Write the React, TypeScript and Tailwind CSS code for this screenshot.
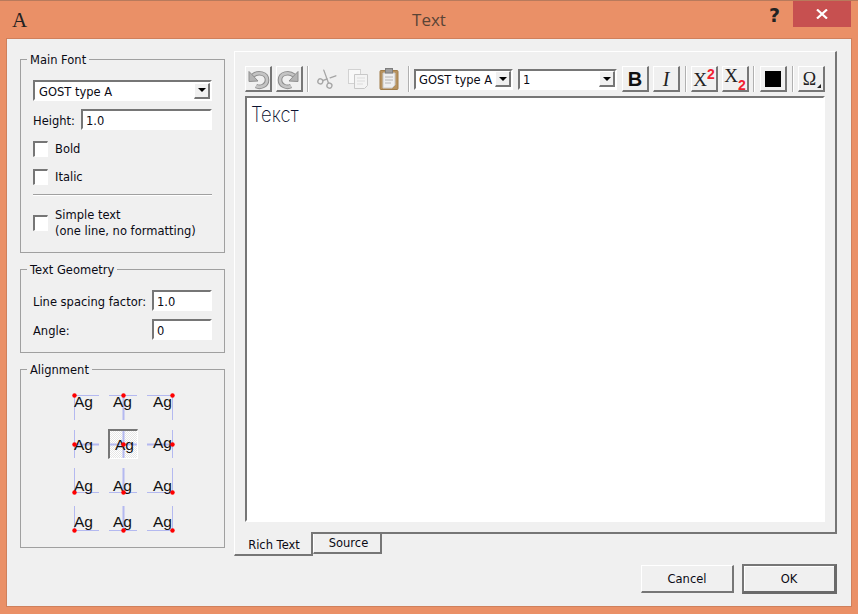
import React from "react";
import { Scissors } from "lucide-react";

const raised = "border-t border-l border-r-2 border-b-2 border-t-white border-l-white border-r-[#767676] border-b-[#767676] bg-[#f0f0f0]";
const sunken = "border-t-2 border-l-2 border-r-2 border-b-2 border-t-[#767676] border-l-[#767676] border-r-white border-b-white bg-white";

function Group({ title, children, className }: { title: string; children: React.ReactNode; className: string }) {
  return (
    <div className={"relative border border-[#a0a0a0] " + className}>
      <span className="absolute -top-[8px] left-[6px] bg-[#f0f0f0] px-[3px] leading-[16px] whitespace-nowrap">{title}</span>
      {children}
    </div>
  );
}

function Arrow() {
  return <span className="w-0 h-0 border-l-[4px] border-r-[4px] border-t-[4px] border-l-transparent border-r-transparent border-t-black" />;
}

function Combo({ text, className, inset }: { text: string; className: string; inset?: boolean }) {
  return (
    <div className={sunken + " flex items-center justify-between pl-[3px] pr-0 " + className}>
      <span className={"whitespace-nowrap pt-[2px] " + (inset ? "pl-[1px]" : "")}>{text}</span>
      <span className={raised + " w-[16px] h-[16px] flex items-center justify-center shrink-0"}>
        <Arrow />
      </span>
    </div>
  );
}

function Input({ value, className }: { value: string; className: string }) {
  return <div className={sunken + " h-[21px] flex items-center pl-[3px] pt-[2px] " + className}>{value}</div>;
}

function Check({ children, className }: { children: React.ReactNode; className?: string }) {
  return (
    <div className={"flex items-center gap-[7px] " + (className ?? "")}>
      <span className="w-[15px] h-[16px] shrink-0 bg-white border-t-2 border-l-2 border-r border-b border-t-[#767676] border-l-[#767676] border-r-white border-b-white" />
      <span className="pt-[1px]">{children}</span>
    </div>
  );
}

function TB({ children, className }: { children?: React.ReactNode; className?: string }) {
  return <div className={raised + " w-[27px] h-[26px] shrink-0 flex items-center justify-center relative " + (className ?? "")}>{children}</div>;
}

function Sep({ className }: { className?: string }) {
  return <div className={"w-[2px] h-[26px] shrink-0 bg-[#b0b0b0] border-r border-r-white " + (className ?? "")} />;
}

function Undo({ flip }: { flip?: boolean }) {
  return (
    <svg width="24" height="22" viewBox="0 0 24 22" style={flip ? { transform: "scaleX(-1)" } : undefined}>
      <path d="M7 7.5 C12 3.5 21 5 21 12 C21 18 14 20 10 18" fill="none" stroke="#8f8f8f" strokeWidth="4.6" />
      <path d="M7 7.5 C12 3.5 21 5 21 12 C21 18 14 20 10 18" fill="none" stroke="#c4c4c4" strokeWidth="2.6" />
      <path d="M3 3.5 L3 13.5 L12 13 Z" fill="#b4b4b4" stroke="#8f8f8f" strokeWidth="1" />
    </svg>
  );
}

function CopyIcon() {
  return (
    <svg width="22" height="22" viewBox="0 0 22 22">
      <rect x="1.5" y="1.5" width="12" height="14" fill="#f8f8f8" stroke="#d2d2d2" />
      <path d="M7.5 6.5 H20.5 V17.5 L17.5 20.5 H7.5 Z" fill="#f4f4f4" stroke="#c8c8c8" />
      <path d="M10 10 H18 M10 13 H18 M10 16 H16" stroke="#dcdcdc" />
    </svg>
  );
}

function PasteIcon() {
  return (
    <svg width="20" height="22" viewBox="0 0 20 22">
      <rect x="1" y="2.5" width="18" height="19" rx="1" fill="#b8935f" stroke="#a17d4a" />
      <path d="M4 5 H16 V17 L13 20 H4 Z" fill="#efefef" stroke="#c9c9c9" />
      <path d="M6 9 H14 M6 12 H14 M6 15 H12" stroke="#b4b4b4" />
      <rect x="6.5" y="0.5" width="7" height="4.5" fill="#9e9e9e" stroke="#7e7e7e" />
    </svg>
  );
}

type Cell = { sel?: boolean; dx: number; dy: number; tx: number; ty: number; v: [number, number]; h: [number, number]; vw: number; hw: number };

function AlignCell({ sel, dx, dy, tx, ty, v, h, vw, hw }: Cell) {
  return (
    <div className="w-[39px] h-[38px]">
      <div className={sel ? "w-[30px] h-[30px] border-t-2 border-l-2 border-t-[#767676] border-l-[#767676] border-r border-b border-r-white border-b-white bg-[repeating-conic-gradient(#e6e6e6_0_25%,#ffffff_0_50%)] bg-[length:2px_2px]" : "w-[30px] h-[30px]"}>
        <svg width="39" height="38" viewBox="0 0 39 38" className={sel ? "-mt-[2px] -ml-[2px]" : ""} style={{ overflow: "visible" }}>
          <line x1={dx} x2={dx} y1={v[0]} y2={v[1]} stroke="#b4b9f0" strokeWidth={vw} />
          <line x1={h[0]} x2={h[1]} y1={dy} y2={dy} stroke="#b4b9f0" strokeWidth={hw} />
          <text x={tx} y={ty} fontFamily="'Liberation Sans', sans-serif" fontSize="15.5" fill="#111">Ag</text>
          <circle cx={dx} cy={dy} r="2.2" fill="#ff0000" />
        </svg>
      </div>
    </div>
  );
}

const cells: Cell[] = [
  { dx: 5.5, dy: 5.5, tx: 5, ty: 17, v: [5, 30], h: [5, 30], vw: 1, hw: 1 },
  { dx: 15.5, dy: 5.5, tx: 5, ty: 17, v: [5, 30], h: [1, 29], vw: 2, hw: 1 },
  { dx: 25.5, dy: 5.5, tx: 6, ty: 17, v: [5, 30], h: [0, 25], vw: 1, hw: 1 },
  { dx: 5.5, dy: 15.5, tx: 5, ty: 21, v: [1, 29], h: [5, 30], vw: 1, hw: 2 },
  { sel: true, dx: 15.5, dy: 15.5, tx: 7, ty: 21, v: [2, 29], h: [2, 29], vw: 2, hw: 2 },
  { dx: 25.5, dy: 15.5, tx: 6, ty: 19, v: [1, 29], h: [0, 25], vw: 1, hw: 2 },
  { dx: 5.5, dy: 25.5, tx: 5, ty: 24, v: [1, 25], h: [5, 30], vw: 1, hw: 1 },
  { dx: 15.5, dy: 25.5, tx: 5, ty: 24, v: [1, 25], h: [1, 29], vw: 2, hw: 1 },
  { dx: 25.5, dy: 25.5, tx: 6, ty: 24, v: [1, 25], h: [0, 25], vw: 1, hw: 1 },
  { dx: 5.5, dy: 25.5, tx: 5, ty: 22, v: [1, 25], h: [5, 30], vw: 1, hw: 1 },
  { dx: 15.5, dy: 25.5, tx: 5, ty: 22, v: [1, 25], h: [1, 29], vw: 2, hw: 1 },
  { dx: 25.5, dy: 25.5, tx: 6, ty: 22, v: [1, 25], h: [0, 25], vw: 1, hw: 1 },
];

export default function App() {
  return (
    <div className="w-[858px] h-[614px] flex flex-col bg-[#ea9067] border-t border-t-[#b87a5c] text-[11.5px] leading-[16px] text-[#0a0a14] font-['DejaVu_Sans',sans-serif] overflow-hidden">
      <div className="h-[37px] shrink-0 flex items-start relative">
        <span className="ml-[12px] mt-[7px] font-['Liberation_Serif',serif] text-[21px] leading-[24px] text-[#222]">A</span>
        <span className="absolute left-0 right-0 top-[8px] text-center font-['Open_Sans',sans-serif] text-[17px] leading-[22px] text-[#5a4436]">Text</span>
        <span className="absolute left-[769px] top-[3px] font-['DejaVu_Sans',sans-serif] font-bold text-[19px] leading-[22px] text-[#222]">?</span>
        <span className="absolute left-[793px] top-0 w-[58px] h-[26px] bg-[#c75050] flex items-center justify-center">
          <svg width="12" height="10" viewBox="0 0 12 10"><path d="M1 0.5 L11 9.5 M11 0.5 L1 9.5" stroke="#fff" strokeWidth="2.2" /></svg>
        </span>
      </div>
      <div className="mx-[6px] h-[569px] shrink-0 bg-[#f0f0f0] border border-[#cf805c] pl-[13px] flex gap-[9px]">
        <div className="w-[205px] shrink-0 pt-[20px] flex flex-col gap-[16px]">
          <Group title="Main Font" className="h-[194px] pt-[20px] pl-[12px] pr-[12px]">
            <Combo text="GOST type A" className="h-[21px]" inset />
            <div className="flex items-center mt-[8px]">
              <span className="w-[48px] shrink-0 pt-[2px]">Height:</span>
              <Input value="1.0" className="flex-1" />
            </div>
            <Check className="mt-[10px]">Bold</Check>
            <Check className="mt-[11px]">Italic</Check>
            <div className="h-[2px] mt-[9px] border-t border-t-[#a0a0a0] border-b border-b-white" />
            <Check className="mt-[10px]">
              Simple text
              <br />
              (one line, no formatting)
            </Check>
          </Group>
          <Group title="Text Geometry" className="h-[84px] pt-[20px] pl-[12px] pr-[12px]">
            <div className="flex items-center justify-between">
              <span className="whitespace-nowrap pt-[2px]">Line spacing factor:</span>
              <Input value="1.0" className="w-[60px]" />
            </div>
            <div className="flex items-center justify-between mt-[8px]">
              <span className="pt-[2px]">Angle:</span>
              <Input value="0" className="w-[60px]" />
            </div>
          </Group>
          <Group title="Alignment" className="h-[179px] pt-[20px] pl-[48px]">
            <div className="grid grid-cols-[39px_39px_39px] grid-rows-[39px_38px_38px_38px]">
              {cells.map((c, i) => (
                <AlignCell key={i} {...c} />
              ))}
            </div>
          </Group>
        </div>
        <div className="w-[603px] shrink-0 pt-[12px] flex flex-col">
          <div className="h-[483px] shrink-0 border-t border-l border-r-2 border-b-2 border-t-white border-l-white border-r-[#767676] border-b-[#767676] pt-[14px] pl-[10px] pr-[10px] pb-[10px] flex flex-col gap-[4px]">
            <div className="h-[26px] shrink-0 flex items-center gap-[4px]">
              <TB><Undo /></TB>
              <TB><Undo flip /></TB>
              <Sep />
              <div className="w-[27px] h-[26px] shrink-0 flex items-center justify-center">
                <Scissors size={20} color="#a6a6a6" strokeWidth={1.6} className="-rotate-[65deg]" />
              </div>
              <div className="w-[27px] h-[26px] shrink-0 flex items-center justify-center"><CopyIcon /></div>
              <div className="w-[27px] h-[26px] shrink-0 flex items-center justify-center"><PasteIcon /></div>
              <Sep className="ml-[2px]" />
              <Combo text="GOST type A" className="w-[99px] h-[21px] shrink-0" />
              <Combo text="1" className="w-[99px] h-[21px] shrink-0 ml-[1px]" />
              <TB className="ml-[1px]"><span className="font-['Liberation_Sans',sans-serif] font-bold text-[20px] leading-[20px] text-[#111]">B</span></TB>
              <TB><span className="font-['Liberation_Serif',serif] italic text-[20px] leading-[20px] text-[#222]">I</span></TB>
              <Sep className="ml-[1px]" />
              <TB>
                <span className="font-['Liberation_Serif',serif] text-[19px] leading-[20px] text-[#222] mt-[3px]">X</span>
                <span className="font-['Liberation_Sans',sans-serif] font-bold text-[14px] leading-[12px] text-[#f02030] -mt-[9px]">2</span>
              </TB>
              <TB>
                <span className="font-['Liberation_Serif',serif] text-[19px] leading-[20px] text-[#222] -mt-[5px]">X</span>
                <span className="font-['Liberation_Sans',sans-serif] font-bold text-[14px] leading-[12px] text-[#f02030] mt-[12px]">2</span>
              </TB>
              <Sep />
              <TB className="ml-[1px]"><span className="w-[16px] h-[16px] bg-black" /></TB>
              <Sep className="ml-[1px]" />
              <TB>
                <span className="font-['Liberation_Serif',serif] text-[18px] leading-[20px] text-[#222] -ml-[3px]">Ω</span>
                <span className="absolute right-[2px] bottom-[2px] w-0 h-0 border-l-[4px] border-t-[4px] border-l-transparent border-t-transparent border-b-0 border-r-[0px] [border-right:4px_solid_#222]" />
              </TB>
            </div>
            <div className={sunken + " flex-1 pl-[4px] pt-[5px]"}>
              <span className="inline-block origin-left scale-x-[0.88] font-['Inter',sans-serif] font-extralight text-[21px] leading-[24px] text-[#0c1230] whitespace-nowrap">Текст</span>
            </div>
          </div>
          <div className="flex h-[22px] -mt-[2px] pl-0 relative">
            <div className="w-[79px] h-[24px] bg-[#f0f0f0] border-l border-l-white border-r-2 border-b-2 border-r-[#767676] border-b-[#767676] flex items-center justify-center pt-[4px] pl-[2px]">Rich Text</div>
            <div className="w-[69px] h-[20px] mt-[2px] border-r-2 border-b-2 border-l border-r-[#767676] border-b-[#767676] border-l-white flex items-center justify-center pl-[3px]">Source</div>
          </div>
          <div className="flex justify-end items-center gap-[8px] mt-[10px]">
            <div className={raised + " w-[93px] h-[28px] flex items-center justify-center"}>Cancel</div>
            <div className="w-[95px] h-[30px] flex items-center justify-center border-t-2 border-l-2 border-r-[3px] border-b-[3px] border-t-[#767676] border-l-[#767676] border-r-[#6a6a6a] border-b-[#6a6a6a] shadow-[inset_1px_1px_0_#fff]">OK</div>
          </div>
        </div>
      </div>
    </div>
  );
}
